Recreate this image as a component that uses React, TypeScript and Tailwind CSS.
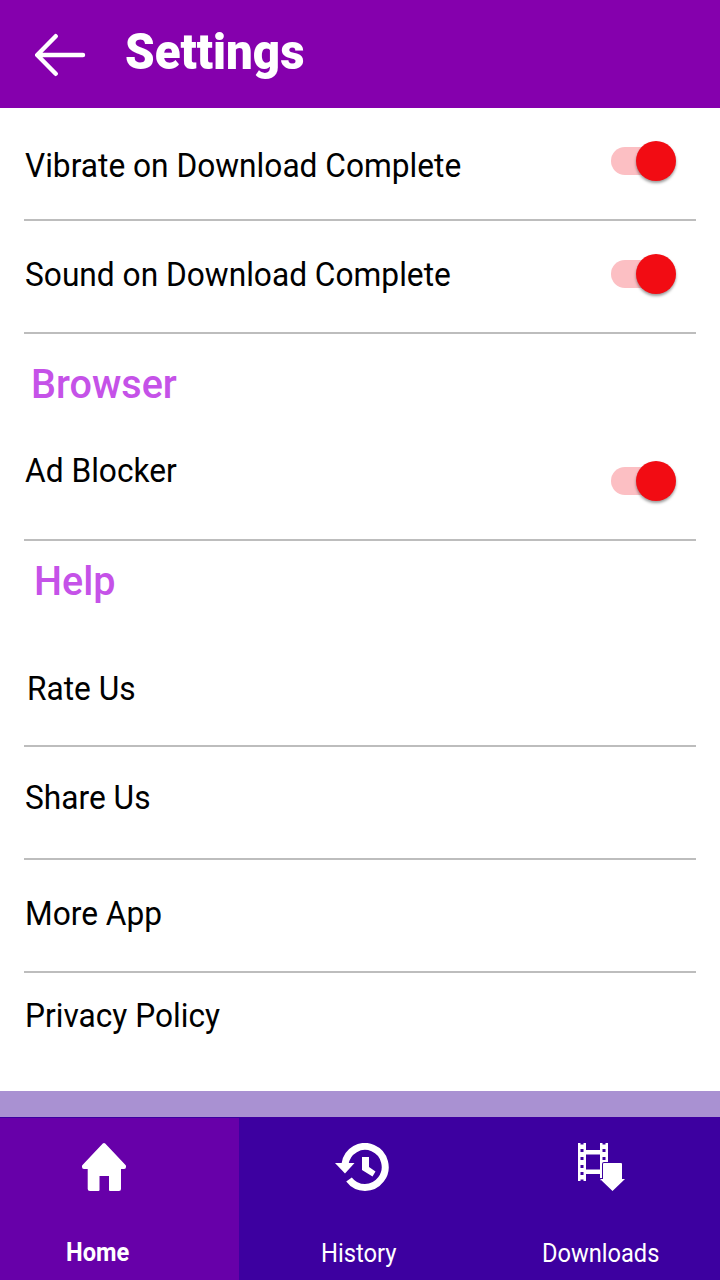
import clsx from 'clsx';

interface RowProps {
  label: string;
  className: string;
  labelClass: string;
  toggleClass?: string;
}

function Toggle({ className }: { className: string }) {
  return (
    <div className={clsx('relative h-[42px] w-[66px]', className)} role="switch" aria-checked="true">
      <div className="absolute top-[7px] left-0 h-7 w-[50px] rounded-full bg-[#fcbfc3]" />
      <div className="absolute top-[1px] right-[1px] size-10 rounded-full bg-[#f20c13] shadow-[0_2px_3px_rgba(0,0,0,0.4)]" />
    </div>
  );
}

function Row({ label, className, labelClass, toggleClass }: RowProps) {
  return (
    <div className={clsx('flex items-start justify-between', className)}>
      <span className={clsx('origin-left scale-x-[0.96] whitespace-nowrap text-[33px] leading-10', labelClass)}>
        {label}
      </span>
      {toggleClass && <Toggle className={toggleClass} />}
    </div>
  );
}

function BackIcon() {
  return (
    <svg width="51" height="44" viewBox="0 0 51 44" fill="none" stroke="#fff" strokeWidth="4.4" strokeLinecap="round" strokeLinejoin="round">
      <path d="M48 22H3M20.7 3.2L2.2 22L20.7 40.8" />
    </svg>
  );
}

function HomeIcon() {
  return (
    <svg width="44" height="48" viewBox="0 0 44 48" fill="#fff">
      <path d="M20.8.6Q22-.6 23.2.6L43.5 22Q44 22.5 44 23.3V24Q44 26 42 26H39V46Q39 48 37 48H28Q27 48 27 47V33H17.5V47Q17.5 48 16.5 48H8Q5.7 48 5.7 46V26H2Q0 26 0 24V23.3Q0 22.5.5 22Z" />
    </svg>
  );
}

function HistoryIcon() {
  return (
    <svg width="55" height="48" viewBox="0 0 55 48" fill="none">
      <path d="M10 21A20.2 20.5 0 1 1 14 36.5" stroke="#fff" strokeWidth="7" />
      <path d="M0 20H19.5L10 30.5Z" fill="#fff" />
      <path d="M27 14H34V24L40.5 28.5L37.5 33.5L27 27Z" fill="#fff" />
    </svg>
  );
}

function DownloadsIcon() {
  return (
    <svg width="48" height="49" viewBox="0 0 48 49">
      <path d="M0 0H8V7H22V0H30V38H0Z" fill="#fff" />
      <path d="M8 11.5H22V26.5H8ZM8 31H22V39H8ZM2.5 0H5.5V1.5H2.5ZM24.5 0H27.5V1.5H24.5ZM2.5 6H5.5V9H2.5ZM24.5 6H27.5V9H24.5ZM2.5 14H5.5V17H2.5ZM24.5 14H27.5V17H24.5ZM2.5 22H5.5V25H2.5ZM2.5 29H5.5V32H2.5ZM2.5 36.5H5.5V38H2.5Z" fill="#3d00a0" />
      <path d="M26 20H43Q44 20 44 21V36H47L34.5 48L22 36H25V21Q25 20 26 20Z" fill="#fff" stroke="#3d00a0" strokeWidth="2" paintOrder="stroke" />
    </svg>
  );
}

export default function App() {
  return (
    <div className="flex h-[1280px] w-[720px] flex-col overflow-hidden bg-white font-['Roboto',sans-serif] text-black">
      <header className="flex h-[108px] shrink-0 items-start bg-[#8500ad] text-white">
        <div className="mt-[33px] ml-[35px]">
          <BackIcon />
        </div>
        <h1 className="mt-[22px] ml-[39px] origin-left scale-x-[0.948] text-[50px] leading-[60px] font-black">
          Settings
        </h1>
      </header>

      <main className="flex h-[983px] shrink-0 flex-col px-6">
        <Row label="Vibrate on Download Complete" className="h-[113px] border-b-2 border-[#bdbdbd]" labelClass="mt-[38px] ml-[1px]" toggleClass="mt-8 mr-[19px]" />
        <Row label="Sound on Download Complete" className="h-[113px] border-b-2 border-[#bdbdbd]" labelClass="mt-[34px] ml-[1px]" toggleClass="mt-8 mr-[19px]" />

        <h2 className="mt-[25px] ml-[7px] h-[50px] origin-left scale-x-[0.965] text-[41px] leading-[50px] font-medium text-[#c552e8]">
          Browser
        </h2>
        <Row label="Ad Blocker" className="h-[132px] border-b-2 border-[#bdbdbd]" labelClass="mt-[42px] ml-[1px]" toggleClass="mt-[51px] mr-[19px]" />

        <h2 className="mt-[15px] ml-[10px] h-[50px] origin-left scale-x-[0.965] text-[41px] leading-[50px] font-medium text-[#c552e8]">
          Help
        </h2>
        <Row label="Rate Us" className="h-[142px] border-b-2 border-[#bdbdbd]" labelClass="mt-[63px] ml-[3px]" />
        <Row label="Share Us" className="h-[113px] border-b-2 border-[#bdbdbd]" labelClass="mt-[31px] ml-[1px]" />
        <Row label="More App" className="h-[113px] border-b-2 border-[#bdbdbd]" labelClass="mt-[34px] ml-[1px]" />
        <Row label="Privacy Policy" className="h-[118px]" labelClass="mt-[23px] ml-[1px]" />
      </main>

      <div className="h-[26px] shrink-0 bg-[#a991d2]" />

      <nav className="flex h-[163px] shrink-0 border-t border-[#3d00a0] bg-[#3d00a0] text-[25px] leading-[30px] text-white">
        <div className="flex w-[239px] flex-col items-start bg-[#6700a9] pt-[25px]">
          <div className="ml-[82px] h-[95px]">
            <HomeIcon />
          </div>
          <span className="ml-[66px] origin-left scale-x-[0.945] font-bold">Home</span>
        </div>
        <div className="flex w-[240px] flex-col items-start pt-[25px]">
          <div className="ml-[96px] h-24">
            <HistoryIcon />
          </div>
          <span className="ml-[82px] origin-left scale-x-[0.95]">History</span>
        </div>
        <div className="flex w-[241px] flex-col items-start pt-[25px]">
          <div className="ml-[99px] h-24">
            <DownloadsIcon />
          </div>
          <span className="ml-[63px] origin-left scale-x-[0.945]">Downloads</span>
        </div>
      </nav>
    </div>
  );
}
